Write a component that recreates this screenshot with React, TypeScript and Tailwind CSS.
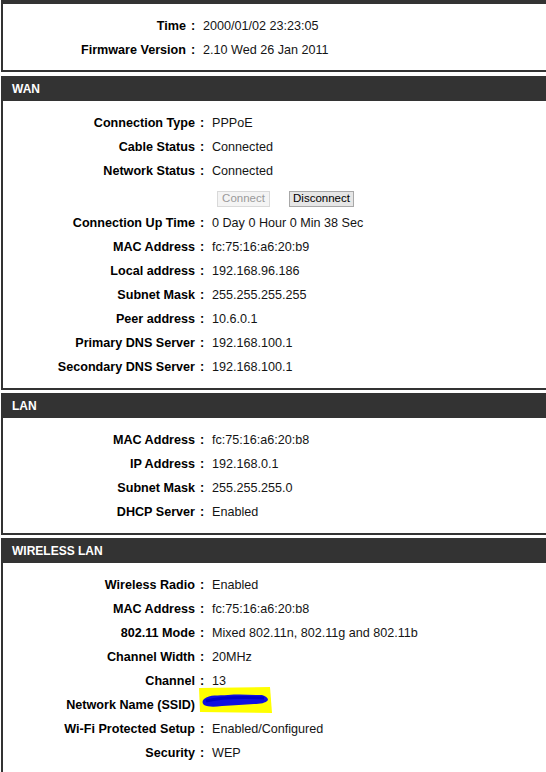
import React from "react";

type Row = [string, string];

function Header({ title }: { title: string }) {
  return (
    <div className="h-[25px] bg-[#333333] flex items-center pl-[11px] text-white font-bold text-[12px] leading-none">
      {title}
    </div>
  );
}

function InfoRow({ label, value, lw, children }: { label: string; value?: string; lw: string; children?: React.ReactNode }) {
  return (
    <div className="flex h-[24px] items-center">
      <div className={`${lw} shrink-0 text-right font-bold text-black`}>{label}</div>
      <div className="w-[17px] shrink-0 pl-[5px] font-bold text-black">:</div>
      <div className="text-[#141414] relative">{children ?? value}</div>
    </div>
  );
}

const wan1: Row[] = [
  ["Connection Type", "PPPoE"],
  ["Cable Status", "Connected"],
  ["Network Status", "Connected"],
];
const wan2: Row[] = [
  ["Connection Up Time", "0 Day 0 Hour 0 Min 38 Sec"],
  ["MAC Address", "fc:75:16:a6:20:b9"],
  ["Local address", "192.168.96.186"],
  ["Subnet Mask", "255.255.255.255"],
  ["Peer address", "10.6.0.1"],
  ["Primary DNS Server", "192.168.100.1"],
  ["Secondary DNS Server", "192.168.100.1"],
];
const lan: Row[] = [
  ["MAC Address", "fc:75:16:a6:20:b8"],
  ["IP Address", "192.168.0.1"],
  ["Subnet Mask", "255.255.255.0"],
  ["DHCP Server", "Enabled"],
];
const wl1: Row[] = [
  ["Wireless Radio", "Enabled"],
  ["MAC Address", "fc:75:16:a6:20:b8"],
  ["802.11 Mode", "Mixed 802.11n, 802.11g and 802.11b"],
  ["Channel Width", "20MHz"],
  ["Channel", "13"],
];
const wl2: Row[] = [
  ["Wi-Fi Protected Setup", "Enabled/Configured"],
  ["Security", "WEP"],
];

const LW = "w-[192px]";

export default function App() {
  return (
    <div className="w-[546px] h-[772px] overflow-hidden bg-white pl-[1px] font-['Liberation_Sans','Arial',sans-serif] text-[12.6px]">
      <div className="w-[570px]">
        {/* top section */}
        <div className="h-[4px] bg-[#333333]" />
        <div className="border-l-2 border-b-2 border-[#333333] pt-[10px] pb-[8px]">
          <InfoRow label="Time" value="2000/01/02 23:23:05" lw="w-[183px]" />
          <InfoRow label="Firmware Version" value="2.10 Wed 26 Jan 2011" lw="w-[183px]" />
        </div>

        {/* WAN */}
        <div className="mt-[4px]">
          <Header title="WAN" />
          <div className="border-l-2 border-b-2 border-[#333333] pt-[10px] pb-[9px]">
            {wan1.map(([l, v]) => (
              <InfoRow key={l} label={l} value={v} lw={LW} />
            ))}
            <div className="flex h-[28px] items-start pt-[8px] pl-[212px]">
              <button className="ml-[2px] h-[16px] w-[53px] border border-[#d9d9d9] bg-[#f4f4f4] text-[#9a9a9a] text-[11.5px] leading-none flex items-center justify-center">
                Connect
              </button>
              <button className="ml-[19px] h-[16px] w-[65px] border border-[#a8a8a8] bg-[#e6e6e6] text-black text-[11.5px] leading-none flex items-center justify-center">
                Disconnect
              </button>
            </div>
            {wan2.map(([l, v]) => (
              <InfoRow key={l} label={l} value={v} lw={LW} />
            ))}
          </div>
        </div>

        {/* LAN */}
        <div className="mt-[3px]">
          <Header title="LAN" />
          <div className="border-l-2 border-b-2 border-[#333333] pt-[10px] pb-[9px]">
            {lan.map(([l, v]) => (
              <InfoRow key={l} label={l} value={v} lw={LW} />
            ))}
          </div>
        </div>

        {/* WIRELESS LAN */}
        <div className="mt-[3px]">
          <Header title="WIRELESS LAN" />
          <div className="border-l-2 border-[#333333] pt-[10px] pb-[10px]">
            {wl1.map(([l, v]) => (
              <InfoRow key={l} label={l} value={v} lw={LW} />
            ))}
            <InfoRow label="Network Name (SSID)" lw={LW}>
              <span className="inline-block w-[60px] h-[14px]" />
              <svg
                className="absolute left-[-14px] top-[-9px]"
                width="76"
                height="28"
                viewBox="0 0 76 28"
              >
                <path d="M1 2 L72 1 L74 27 L2 26 Z" fill="#ffff00" />
                <path
                  d="M6 13 C12 8 20 10 30 9 C42 8 52 9 64 9 C68 10 70 12 70 14 C68 17 62 18 56 18 C46 19 36 19 24 20 C16 21 10 21 6 19 C4 17 4 15 6 13 Z"
                  fill="#1010e0"
                />
                <path d="M8 15 C20 12 40 11 66 12" stroke="#0000c8" strokeWidth="3" fill="none" />
              </svg>
            </InfoRow>
            {wl2.map(([l, v]) => (
              <InfoRow key={l} label={l} value={v} lw={LW} />
            ))}
          </div>
        </div>
      </div>
    </div>
  );
}
